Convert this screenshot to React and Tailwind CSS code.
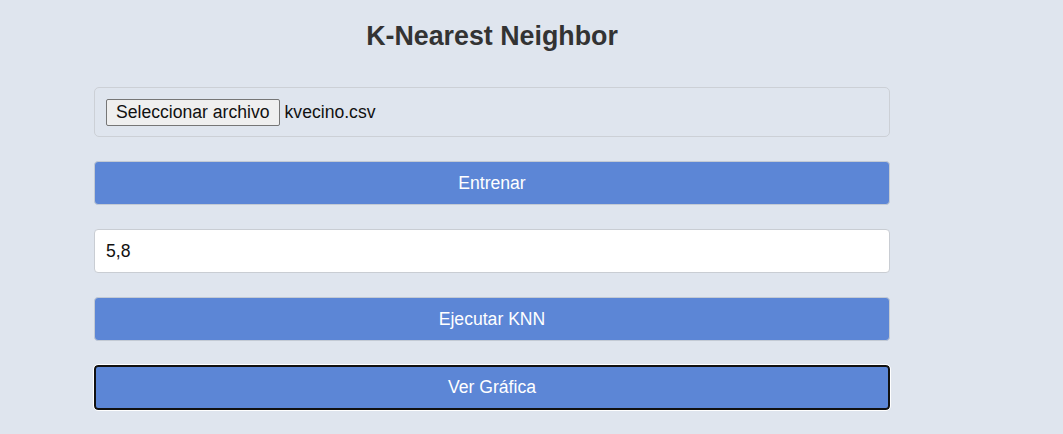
export default function App() {
  return (
    <div className="min-h-[434px] bg-[#dfe5ee] font-['Liberation_Sans',Arial,sans-serif] text-[#333]">
      <div className="ml-[94px] w-[796px] pt-[19px]">
        <h1 className="text-center text-[26.8px] font-bold leading-[34px] text-[#333]">K-Nearest Neighbor</h1>

        <div className="mt-[34px] flex flex-col gap-[24px]">
          {/* Archivo */}
          <div className="flex h-[50px] items-center rounded-[5px] border border-[#ccd0d6] px-[11px]">
            <span className="rounded-[2px] border border-[#767676] bg-[#efefef] px-[9px] py-[1px] text-[17.6px] leading-[23px] text-[#111]">
              Seleccionar archivo
            </span>
            <span className="ml-[5px] text-[17.6px] text-[#111]">kvecino.csv</span>
          </div>

          <button className="h-[44px] w-full rounded-[4px] border border-[#c3cad4] bg-[#5c86d6] text-[17.6px] text-white">
            Entrenar
          </button>

          <div className="flex h-[44px] items-center rounded-[4px] border border-[#c9cdd3] bg-white px-[11px] text-[17.6px] text-[#111]">
            5,8
          </div>

          <button className="h-[44px] w-full rounded-[4px] border border-[#c3cad4] bg-[#5c86d6] text-[17.6px] text-white">
            Ejecutar KNN
          </button>

          <button className="h-[45px] w-full rounded-[4px] border-2 border-[#111] bg-[#5c86d6] text-[17.6px] text-white outline outline-1 outline-white">
            Ver Gráfica
          </button>
        </div>
      </div>
    </div>
  );
}
